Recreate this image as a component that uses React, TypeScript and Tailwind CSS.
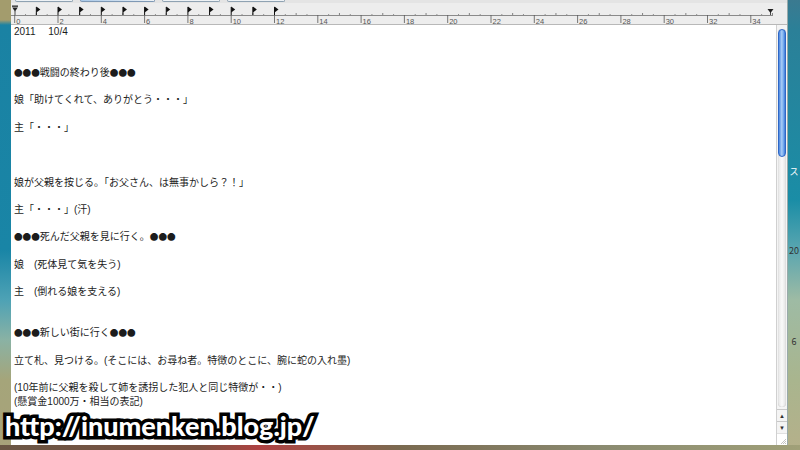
import React from 'react';

const lines = [
  '2011\u3000 10/4',
  '',
  '',
  '●●●戦闘の終わり後●●●',
  '',
  '娘「助けてくれて、ありがとう・・・」',
  '',
  '主「・・・」',
  '',
  '',
  '',
  '娘が父親を按じる。「お父さん、は無事かしら？！」',
  '',
  '主「・・・」(汗)',
  '',
  '●●●死んだ父親を見に行く。●●●',
  '',
  '娘\u3000(死体見て気を失う)',
  '',
  '主\u3000(倒れる娘を支える)',
  '',
  '',
  '●●●新しい街に行く●●●',
  '',
  '立て札、見つける。(そこには、お尋ね者。特徴のとこに、腕に蛇の入れ墨)',
  '',
  '(10年前に父親を殺して姉を誘拐した犯人と同じ特徴が・・)',
  '(懸賞金1000万・相当の表記)',
];

const UNIT = 21.65;
const X0 = 3.7;

// bullets need the CJK face so they come out round and full width
const renderLine = (l: string) =>
  l.split(/(●+)/).map((part, i) =>
    part.startsWith('●') ? (
      <span key={i} className="font-['Noto_Sans_CJK_JP',sans-serif] text-[8.6px]">
        {part}
      </span>
    ) : (
      <React.Fragment key={i}>{part}</React.Fragment>
    )
  );

const Ruler: React.FC = () => {
  const marks: React.ReactNode[] = [];
  for (let i = 0; i <= 35; i++) {
    const x = X0 + i * UNIT;
    if (i % 2 === 0) {
      marks.push(<line key={`M${i}`} x1={x} y1={12} x2={x} y2={20} stroke="#555" strokeWidth={0.8} />);
      marks.push(
        <text key={`n${i}`} x={x + 1.5} y={21} fontSize={7.5} fill="#555" fontFamily="Liberation Sans, sans-serif">
          {i}
        </text>
      );
    } else {
      marks.push(<line key={`o${i}`} x1={x} y1={10} x2={x} y2={12} stroke="#666" strokeWidth={0.8} />);
    }
    const h = x + UNIT / 2;
    if (h < 765) marks.push(<line key={`h${i}`} x1={h} y1={11} x2={h} y2={12} stroke="#777" strokeWidth={0.8} />);
  }
  const flags: React.ReactNode[] = [];
  for (let i = 1; i <= 12; i++) {
    const x = X0 + i * UNIT;
    flags.push(
      <g key={`f${i}`}>
        <line x1={x} y1={4} x2={x} y2={12} stroke="#111" strokeWidth={1} />
        <path d={`M${x} 3.5 L${x + 4} 6.5 L${x} 9.5 Z`} fill="#111" />
      </g>
    );
  }
  return (
    <svg width={776} height={22} className="block">
      <rect x={0} y={0} width={776} height={22} fill="#ededed" />
      <line x1={0} y1={12.5} x2={762} y2={12.5} stroke="#8a8a8a" strokeWidth={1} />
      {marks}
      {flags}
      <rect x={1} y={2.5} width={6} height={1.3} fill="#222" />
      <path d="M1.2 4.5 L6.8 4.5 L4 8.5 Z" fill="#222" />
      <line x1={4} y1={8} x2={4} y2={12} stroke="#222" strokeWidth={0.8} />
      <path d="M756.5 6 L762.5 6 L759.5 10 Z" fill="#222" />
      <line x1={759.5} y1={9} x2={759.5} y2={12} stroke="#222" strokeWidth={0.8} />
      <line x1={0} y1={21.5} x2={776} y2={21.5} stroke="#b8b8b8" strokeWidth={1} />
    </svg>
  );
};

const Scrollbar: React.FC = () => (
  <div className="w-[11px] flex flex-col bg-[#f4f4f4] border-l border-[#d0d0d0]">
    <div className="flex-1 flex flex-col px-[1px] pt-[4px] pb-[2px]">
      <div className="flex-1 rounded-full bg-[linear-gradient(to_right,#e6e6e6,#fafafa_50%,#e2e2e2)] shadow-[inset_0_0_1px_#aaa] flex flex-col">
        <div className="h-[128px] rounded-full border border-[#2e67c6] bg-[linear-gradient(to_right,#4a86e0,#a8ccf6_45%,#7db0f0_70%,#3f7bd8)]" />
      </div>
    </div>
    <div className="h-[12px] border-t border-[#c8c8c8] flex items-center justify-center text-[#333] text-[6px] leading-none">▲</div>
    <div className="h-[12px] border-t border-[#c8c8c8] flex items-center justify-center text-[#333] text-[6px] leading-none">▼</div>
    <div className="h-[12px] border-t border-[#e0e0e0] bg-white">
      <svg width={10} height={12} className="block">
        <line x1={9} y1={5} x2={4} y2={10} stroke="#aaa" strokeWidth={0.7} />
        <line x1={9} y1={7} x2={6} y2={10} stroke="#aaa" strokeWidth={0.7} />
        <line x1={9} y1={9} x2={8} y2={10} stroke="#aaa" strokeWidth={0.7} />
      </svg>
    </div>
  </div>
);

export default function App() {
  return (
    <div className="w-[800px] h-[450px] overflow-hidden relative flex flex-col bg-white">
      <div className="h-[445px] flex">
        <div className="w-[11px] bg-[linear-gradient(to_bottom,#a39c6d_0px,#a39c6d_20px,#1a82a3_25px,#1985a6_250px,#4ea2b5_300px,#8ab2a4_340px,#a5a57a_380px,#a8a27a_450px)]" />
        <div className="w-[776px] flex flex-col bg-white">
          <div className="h-[3px] bg-[#e4e4e4] flex gap-[7px] pl-[4px]">
            <div className="w-[58px] h-[2px] rounded-b-[3px] bg-[#eef2f5] border-b border-x border-[#8fa2b2]" />
            <div className="w-[75px] h-[2px] rounded-b-[3px] bg-[linear-gradient(to_right,#a8c8e8,#eef2f5)] border-b border-x border-[#7f99b5]" />
            <div className="w-[58px] h-[2px] rounded-b-[3px] bg-[#eef2f5] border-b border-x border-[#8fa2b2]" />
            <div className="w-[58px] h-[2px] rounded-b-[3px] bg-[#eef2f5] border-b border-x border-[#8fa2b2]" />
          </div>
          <Ruler />
          <div className="flex-1 flex min-h-0">
            <div className="flex-1 pl-[3px] text-[10px] leading-[13.7px] text-[#1c1c1c] font-['Liberation_Sans','Noto_Sans_CJK_JP',sans-serif]">
              {lines.map((l, i) => (
                <div key={i} className="h-[13.7px] whitespace-pre">
                  {renderLine(l)}
                </div>
              ))}
            </div>
            <Scrollbar />
          </div>
        </div>
        <div className="w-[13px] border-l border-[#9aa] bg-[linear-gradient(to_bottom,#3b7a90_0px,#2b8098_30px,#1a8da6_200px,#5aa6b0_250px,#9ebba4_300px,#a9b58e_380px,#b5b08a_450px)] flex flex-col items-center text-white text-[9px] leading-none font-['Noto_Sans_CJK_JP',sans-serif]">
          <div className="mt-[167px]">ス</div>
          <div className="mt-[70px] text-[#333]">20</div>
          <div className="mt-[82px] text-[#333]">6</div>
        </div>
      </div>
      <div className="h-[5px] bg-[linear-gradient(to_right,#6a5644,#7a5040_200px,#b04242_260px,#7a6a50_400px,#8a8a70_600px,#a0a078)]" />
      <div className="absolute left-[5px] top-[412px] text-white text-[27px] font-black tracking-[0px] leading-none font-['Lato','Liberation_Sans',sans-serif] [-webkit-text-stroke:7px_#000] [paint-order:stroke_fill]">
        http://inumenken.blog.jp/
      </div>
    </div>
  );
}
